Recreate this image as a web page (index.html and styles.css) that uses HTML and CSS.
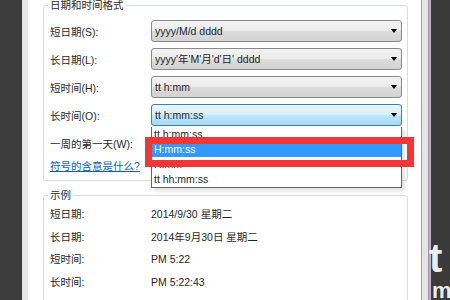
FILE: index.html
```html
<!DOCTYPE html>
<html>
<head>
    <meta charset="utf-8">
    <title>区域和语言 - 自定义格式</title>
    <link rel="stylesheet" href="styles.css">
</head>
<body>
    <div class="screen">
        <div class="side-left"></div>
        <div class="window">
            <div class="panel">
                <fieldset class="group group-format">
                    <legend>日期和时间格式</legend>
                    <div class="row">
                        <span class="label">短日期(S):</span>
                        <div class="combo">yyyy/M/d dddd<span class="arrow"></span></div>
                    </div>
                    <div class="row">
                        <span class="label">长日期(L):</span>
                        <div class="combo">yyyy'年'M'月'd'日' dddd<span class="arrow"></span></div>
                    </div>
                    <div class="row">
                        <span class="label">短时间(H):</span>
                        <div class="combo">tt h:mm<span class="arrow"></span></div>
                    </div>
                    <div class="row">
                        <span class="label">长时间(O):</span>
                        <div class="combo focused">tt h:mm:ss<span class="arrow"></span></div>
                    </div>
                    <div class="row">
                        <span class="label">一周的第一天(W):</span>
                        <div class="combo">星期一<span class="arrow"></span></div>
                    </div>
                    <a class="help-link" href="#">符号的含意是什么?</a>
                </fieldset>

                <fieldset class="group group-sample">
                    <legend>示例</legend>
                    <div class="sample-row"><span>短日期:</span><span>2014/9/30 星期二</span></div>
                    <div class="sample-row"><span>长日期:</span><span>2014年9月30日 星期二</span></div>
                    <div class="sample-row"><span>短时间:</span><span>PM 5:22</span></div>
                    <div class="sample-row"><span>长时间:</span><span>PM 5:22:43</span></div>
                </fieldset>
            </div>
        </div>
        <div class="side-right"></div>

        <!-- open list of the 长时间 combo -->
        <ul class="dropdown">
            <li>tt h:mm:ss</li>
            <li class="selected">H:mm:ss</li>
            <li>H:mm</li>
            <li>tt hh:mm:ss</li>
        </ul>

        <!-- red marker drawn over the screenshot -->
        <div class="mark"></div>

        <div class="watermark">
            <span class="wm-big">t</span>
            <span class="wm-small">m</span>
        </div>
    </div>
</body>
</html>
```

FILE: styles.css
```css
body {
    margin: 0;
    font-family: "Liberation Sans", "Noto Sans CJK SC", sans-serif;
    font-size: 10.5px;
    color: #1f1f1f;
    background-color: #3b3b3b;
}

.screen {
    position: relative;
    display: flex;
    width: 450px;
    height: 300px;
    overflow: hidden;
}

.side-left {
    width: 22px;
    flex-shrink: 0;
    background-color: #3c3c3c;
}

.window {
    display: flex;
    flex-shrink: 0;
    border-left: 6px solid #e6e6e6;
    border-right: 1px solid #9a9a9a;
    padding-right: 6px;
    background-color: #e4e4e4;
}

.panel {
    width: 365px;
    padding: 0 13px 0 15px;
    border-right: 1px solid #a3a3a3;
    background-color: #fff;
}

.side-right {
    flex: 1;
    border-left: 2px solid #bfaecb;
    background-color: #3a3a3a;
}

/* group boxes */
.group {
    margin: 0;
    border: 1px solid #d5dde3;
    border-radius: 3px;
}

.group legend {
    padding: 0 2px;
    margin-left: -2px;
    line-height: 12px;
    color: #2a2a2a;
}

.group-format {
    margin-top: -1px;
    padding: 9px 5px 7px 6px;
}

.group-sample {
    margin-top: 8px;
    padding: 2px 5px 40px 6px;
}

.row {
    display: grid;
    grid-template-columns: 101px 1fr;
    align-items: center;
    height: 22px;
    margin-bottom: 6px;
}

.combo {
    position: relative;
    height: 20px;
    line-height: 20px;
    padding-left: 3px;
    border: 1px solid #8a8a8a;
    border-radius: 3px;
    background: linear-gradient(#f3f3f3, #ebebeb 50%, #dcdcdc 51%, #d2d2d2);
    white-space: nowrap;
}

.combo.focused {
    border-color: #3c7fb1;
    background: linear-gradient(#eaf6fd, #d9f0fc 50%, #bee6fd 51%, #a7d9f5);
}

.arrow {
    position: absolute;
    right: 4px;
    top: 8px;
    width: 0;
    height: 0;
    border-left: 3.5px solid transparent;
    border-right: 3.5px solid transparent;
    border-top: 4px solid #000;
}

.help-link {
    display: inline-block;
    margin-top: -1px;
    line-height: 14px;
    color: #0a5fb4;
    text-decoration: underline;
}

.sample-row {
    display: grid;
    grid-template-columns: 101px 1fr;
    line-height: 22.5px;
}

/* open drop-down list */
.dropdown {
    position: absolute;
    left: 151px;
    top: 127px;
    width: 249px;
    margin: 0;
    padding: 0;
    list-style: none;
    border: 1px solid #646464;
    border-top: none;
    background-color: #fff;
    box-shadow: 3px 3px 4px rgba(0, 0, 0, 0.12);
}

.dropdown li {
    height: 15px;
    line-height: 15px;
    padding-left: 2px;
}

.dropdown li.selected {
    background-color: #3399ff;
    color: #fff;
}

.mark {
    position: absolute;
    left: 145px;
    top: 137px;
    width: 269px;
    height: 30px;
    box-sizing: border-box;
    border: 7px solid #f23535;
}

.watermark {
    position: absolute;
    left: 429px;
    top: 236px;
    color: rgba(255, 255, 255, 0.92);
    font-family: "Liberation Sans", sans-serif;
    font-weight: bold;
}

.wm-big {
    display: block;
    font-size: 40px;
    line-height: 44px;
}

.wm-small {
    display: block;
    font-size: 22px;
    line-height: 22px;
    margin-left: 3px;
}
```
